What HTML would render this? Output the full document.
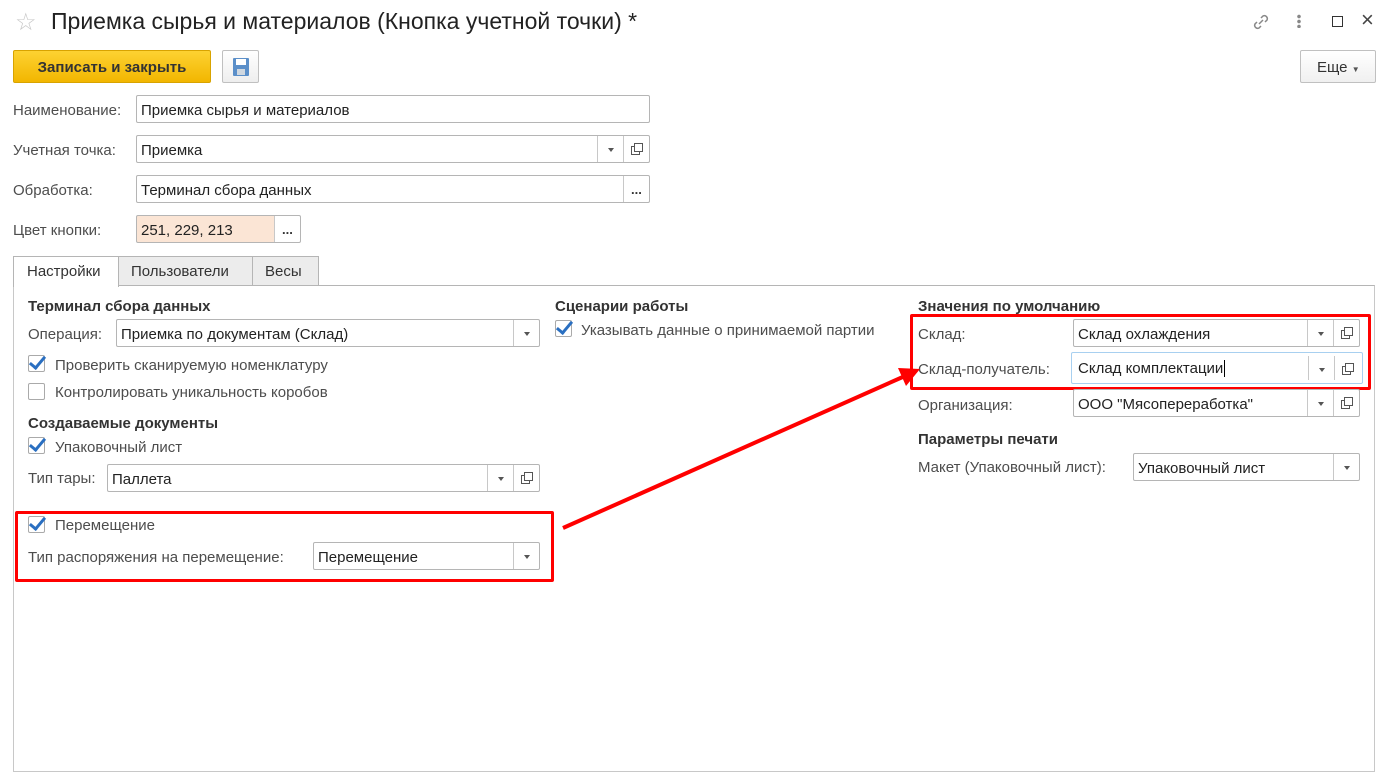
<!DOCTYPE html>
<html><head><meta charset="utf-8"><style>
*{box-sizing:border-box}
body{margin:0;width:1393px;height:779px;background:#fff;font-family:"Liberation Sans",Arial,sans-serif;font-size:15px;color:#333;position:relative;overflow:hidden}
.a{position:absolute;white-space:nowrap}
.lbl{color:#4d4d4d;margin-top:2px}
.in{position:absolute;border:1px solid #b5b5b5;border-radius:2px;background:#fff;height:28px;padding:0 4px;line-height:29px;color:#222;overflow:hidden}
.dd,.cp,.el{position:absolute;top:0;bottom:0;width:26px;border-left:1px solid #c8c8c8}
.dd::after{content:"";position:absolute;left:10px;top:12px;border:3.5px solid transparent;border-top:4px solid #555}
.cp::before{content:"";position:absolute;left:7px;top:10px;width:7px;height:7px;border:1px solid #555;background:#fff}
.cp::after{content:"";position:absolute;left:10px;top:7px;width:7px;height:7px;border:1px solid #555;background:#fff}
.el::after{content:"...";position:absolute;left:7px;top:-1px;font-weight:bold;font-size:13px;color:#333}
.b{font-weight:bold;color:#333;margin-top:2px}
.cb{position:absolute;width:17px;height:17px;border:1px solid #aaa;border-radius:2px;background:#fff}
.cb.on::after{content:"";position:absolute;left:4px;top:-3px;width:6px;height:13px;border:solid #2a6fc1;border-width:0 3px 3px 0;transform:rotate(40deg)}
.red{position:absolute;border:3px solid #f00;border-radius:2px}
</style></head><body>
<div class="a" style="left:15px;top:8px;font-size:24px;color:#c8c8c8">☆</div>
<div class="a" style="left:51px;top:8px;font-size:23px;color:#222">Приемка сырья и материалов (Кнопка учетной точки) *</div>
<svg class="a" style="left:1250px;top:11px" width="22" height="22" viewBox="0 0 22 22" fill="none" stroke="#888" stroke-width="1.5"><path d="M9 13l4-4M7 11l-2 2a3 3 0 004 4l2-2M15 11l2-2a3 3 0 00-4-4l-2 2"/></svg>
<div class="a" style="left:1297px;top:14px;width:4px;height:14px;background:radial-gradient(circle,#888 1.6px,transparent 2px) 0 0/4px 5px"></div>
<div class="a" style="left:1332px;top:16px;width:11px;height:11px;border:1.5px solid #333"></div>
<div class="a" style="left:1361px;top:7px;font-size:22px;color:#444">×</div>
<div class="a" style="left:13px;top:50px;width:198px;height:33px;background:linear-gradient(#fdd232,#f2b600);border:1px solid #d8a300;border-radius:2px;font-weight:bold;text-align:center;line-height:33px;color:#333">Записать и закрыть</div>
<div class="a" style="left:222px;top:50px;width:37px;height:33px;border:1px solid #c0c0c0;border-radius:2px;background:linear-gradient(#fff,#eee)"><div style="position:absolute;left:10px;top:7px;width:16px;height:18px;background:#5b8fc9;border-radius:1px"><div style="position:absolute;left:3px;top:1px;width:10px;height:6px;background:#fff"></div><div style="position:absolute;left:4px;top:11px;width:8px;height:6px;background:#d0d8e0"></div></div></div>
<div class="a" style="left:1300px;top:50px;width:76px;height:33px;border:1px solid #c0c0c0;border-radius:2px;background:linear-gradient(#fff,#f0f0f0);line-height:33px;padding-left:16px;color:#333">Еще <span style="font-size:8px;color:#555">▼</span></div>

<div class="a lbl" style="left:13px;top:100px">Наименование:</div>
<div class="in" style="left:136px;top:95px;width:514px">Приемка сырья и материалов</div>
<div class="a lbl" style="left:13px;top:140px">Учетная точка:</div>
<div class="in" style="left:136px;top:135px;width:514px">Приемка<div class="dd" style="right:26px"></div><div class="cp" style="right:0"></div></div>
<div class="a lbl" style="left:13px;top:180px">Обработка:</div>
<div class="in" style="left:136px;top:175px;width:514px">Терминал сбора данных<div class="el" style="right:0"></div></div>
<div class="a lbl" style="left:13px;top:220px">Цвет кнопки:</div>
<div class="in" style="left:136px;top:215px;width:165px;background:linear-gradient(90deg,#fbe5d5 137px,#fff 137px)">251, 229, 213<div class="el" style="right:0"></div></div>

<div class="a" style="left:13px;top:285px;width:1362px;height:487px;border:1px solid #c8c8c8;border-top:1px solid #b5b5b5"></div>
<div class="a" style="left:13px;top:256px;width:106px;height:31px;border:1px solid #b5b5b5;border-bottom:none;background:#fff;padding:6px 0 0 13px;color:#333">Настройки</div>
<div class="a" style="left:118px;top:256px;width:135px;height:30px;border:1px solid #b5b5b5;background:#ececec;padding:6px 0 0 12px;color:#333">Пользователи</div>
<div class="a" style="left:252px;top:256px;width:67px;height:30px;border:1px solid #b5b5b5;background:#ececec;padding:6px 0 0 12px;color:#333">Весы</div>

<div class="a b" style="left:28px;top:296px">Терминал сбора данных</div>
<div class="a lbl" style="left:28px;top:324px">Операция:</div>
<div class="in" style="left:116px;top:319px;width:424px">Приемка по документам (Склад)<div class="dd" style="right:0"></div></div>
<div class="cb on" style="left:28px;top:355px"></div><div class="a lbl" style="left:55px;top:355px">Проверить сканируемую номенклатуру</div>
<div class="cb" style="left:28px;top:383px"></div><div class="a lbl" style="left:55px;top:382px">Контролировать уникальность коробов</div>
<div class="a b" style="left:28px;top:413px">Создаваемые документы</div>
<div class="cb on" style="left:28px;top:437px"></div><div class="a lbl" style="left:55px;top:437px">Упаковочный лист</div>
<div class="a lbl" style="left:28px;top:468px">Тип тары:</div>
<div class="in" style="left:107px;top:464px;width:433px">Паллета<div class="dd" style="right:26px"></div><div class="cp" style="right:0"></div></div>
<div class="red" style="left:15px;top:511px;width:539px;height:71px"></div>
<div class="cb on" style="left:28px;top:516px"></div><div class="a lbl" style="left:55px;top:515px">Перемещение</div>
<div class="a lbl" style="left:28px;top:547px">Тип распоряжения на перемещение:</div>
<div class="in" style="left:313px;top:542px;width:227px">Перемещение<div class="dd" style="right:0"></div></div>

<div class="a b" style="left:555px;top:296px">Сценарии работы</div>
<div class="cb on" style="left:555px;top:320px"></div><div class="a lbl" style="left:581px;top:320px">Указывать данные о принимаемой партии</div>

<div class="a b" style="left:918px;top:296px">Значения по умолчанию</div>
<div class="red" style="left:910px;top:314px;width:461px;height:76px"></div>
<div class="a lbl" style="left:918px;top:324px">Склад:</div>
<div class="in" style="left:1073px;top:319px;width:287px">Склад охлаждения<div class="dd" style="right:26px"></div><div class="cp" style="right:0"></div></div>
<div class="a lbl" style="left:918px;top:359px">Склад-получатель:</div>
<div class="in" style="left:1071px;top:352px;width:292px;height:32px;border-color:#a8d0f0;line-height:32px;padding-left:6px">Склад комплектации<span style="border-left:1px solid #000;margin-left:1px"></span><div class="dd" style="right:28px;top:3px;bottom:3px"></div><div class="cp" style="right:2px;top:3px;bottom:3px"></div></div>
<div class="a lbl" style="left:918px;top:395px">Организация:</div>
<div class="in" style="left:1073px;top:389px;width:287px">ООО "Мясопереработка"<div class="dd" style="right:26px"></div><div class="cp" style="right:0"></div></div>
<div class="a b" style="left:918px;top:429px">Параметры печати</div>
<div class="a lbl" style="left:918px;top:457px">Макет (Упаковочный лист):</div>
<div class="in" style="left:1133px;top:453px;width:227px">Упаковочный лист<div class="dd" style="right:0"></div></div>

<svg class="a" style="left:0;top:0" width="1393" height="779"><line x1="563" y1="528" x2="905" y2="376" stroke="#f00" stroke-width="4"/><polygon points="920,369 898,368 906,386" fill="#f00"/></svg>
</body></html>
